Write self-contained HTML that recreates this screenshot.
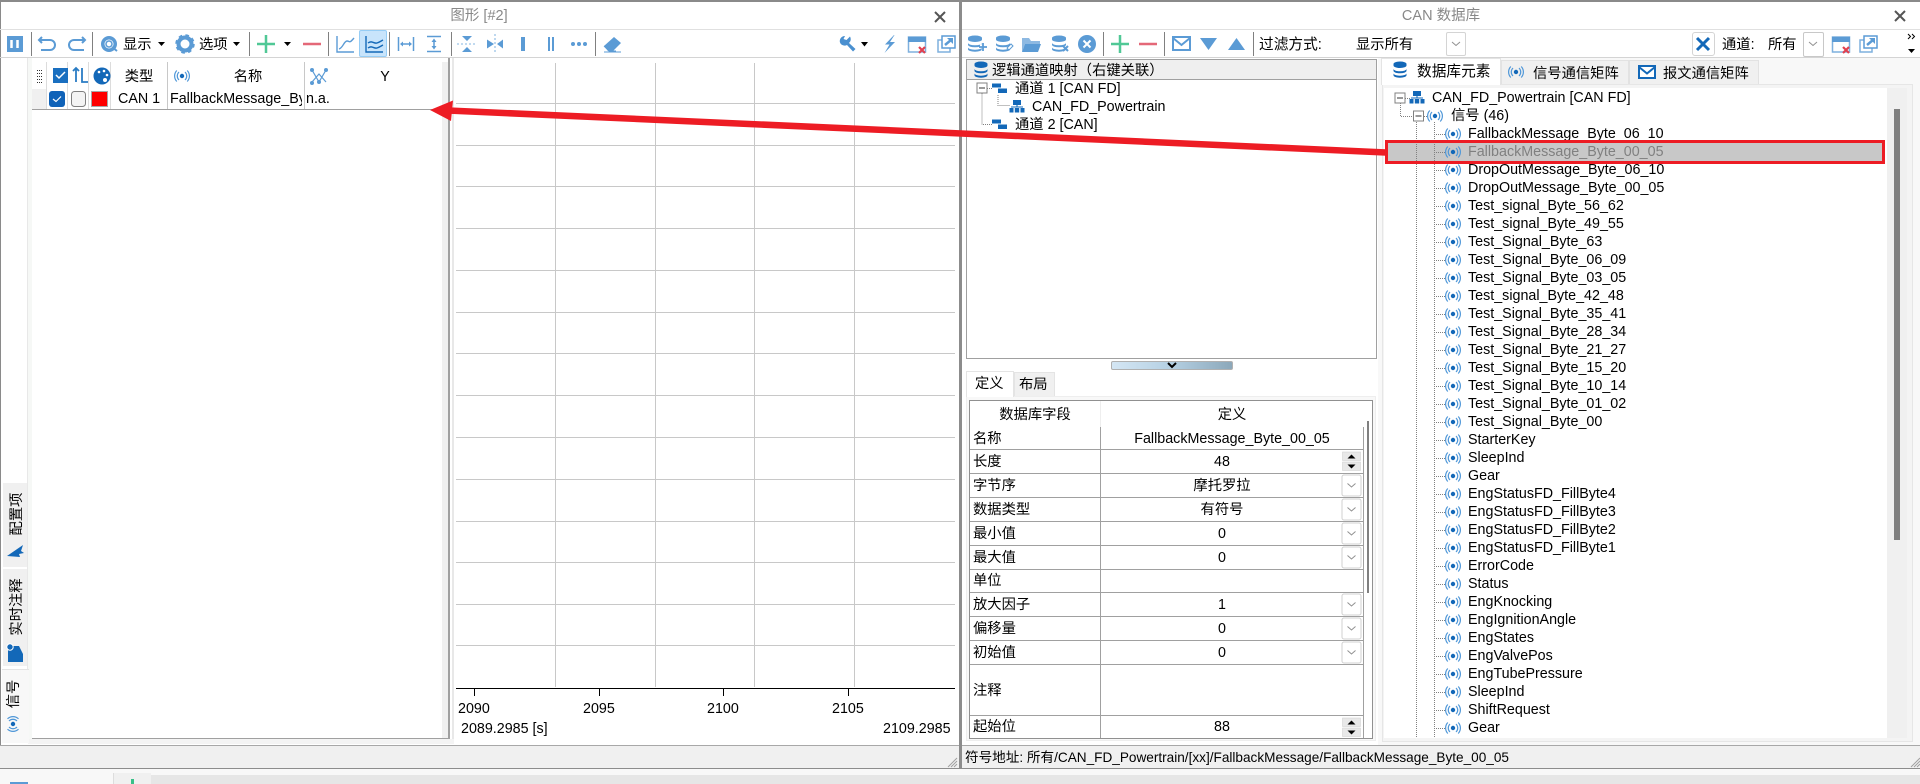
<!DOCTYPE html>
<html><head><meta charset="utf-8"><style>
html,body{margin:0;padding:0;background:#fff}
#p{position:relative;width:1920px;height:784px;overflow:hidden;background:#fff;font-family:"Liberation Sans","Noto Sans CJK SC",sans-serif;font-size:14.3px;color:#000}
.b{position:absolute}
.t{position:absolute;white-space:nowrap;line-height:18px;height:18px}
.c{transform:translateX(-50%)}
.r{transform:rotate(-90deg);transform-origin:center}
svg{position:absolute;left:0;top:0}
</style></head><body><div id="p">
<!-- frames -->
<div class="b" style="left:0;top:0;width:1920px;height:2px;background:#8a8a8a"></div>
<div class="b" style="left:0;top:0;width:1px;height:770px;background:#8a8a8a"></div>
<div class="b" style="left:0;top:29px;width:959px;height:1px;background:#e0e0e0"></div>
<div class="b" style="left:961px;top:29px;width:959px;height:1px;background:#e0e0e0"></div>
<div class="b" style="left:0;top:57px;width:959px;height:1px;background:#d4d4d4"></div>
<div class="b" style="left:961px;top:57px;width:959px;height:1px;background:#d4d4d4"></div>
<div class="b" style="left:959px;top:0;width:3px;height:770px;background:#8c8c8c"></div>

<!-- left panel -->
<div class="b" style="left:27px;top:58px;width:1px;height:681px;background:#e8e8e8"></div>
<div class="b" style="left:28px;top:58px;width:4px;height:685px;background:#f6f8f6"></div>
<div class="b" style="left:442px;top:62px;width:6px;height:676px;background:#f0f0f0"></div>
<div class="b" style="left:448px;top:58px;width:2px;height:681px;background:#a0a0a0"></div>
<div class="b" style="left:452px;top:58px;width:2px;height:686px;background:#e8e8e8"></div>
<div class="b" style="left:32px;top:738px;width:418px;height:1px;background:#a0a0a0"></div>
<div class="b" style="left:28px;top:739px;width:426px;height:5px;background:#f4f4f4"></div>
<div class="b" style="left:32px;top:89px;width:14px;height:20px;background:#f0f0f0"></div>
<div class="b" style="left:32px;top:109px;width:410px;height:1px;background:#a0a0a0"></div>
<div class="b" style="left:46px;top:62px;width:1px;height:47px;background:#dcdcdc"></div>
<div class="b" style="left:67px;top:62px;width:1px;height:47px;background:#dcdcdc"></div>
<div class="b" style="left:88px;top:62px;width:1px;height:47px;background:#dcdcdc"></div>
<div class="b" style="left:110px;top:62px;width:1px;height:47px;background:#dcdcdc"></div>
<div class="b" style="left:167px;top:62px;width:1px;height:47px;background:#c8c8c8"></div>
<div class="b" style="left:304px;top:62px;width:1px;height:47px;background:#c8c8c8"></div>

<!-- left tabs -->
<div class="b" style="left:3px;top:483px;width:24px;height:84px;background:#f0f0f0"></div>
<div class="b" style="left:3px;top:569px;width:24px;height:97px;background:#f0f0f0"></div>
<div class="b" style="left:2px;top:669px;width:27px;height:73px;background:#f8f8f8;border-top:1px solid #e4e4e4"></div>

<!-- bottom bars -->
<div class="b" style="left:0;top:745px;width:959px;height:1px;background:#a8a8a8"></div>
<div class="b" style="left:0;top:746px;width:959px;height:22px;background:#f0f0f0"></div>
<div class="b" style="left:962px;top:745px;width:958px;height:1px;background:#a8a8a8"></div>
<div class="b" style="left:962px;top:746px;width:958px;height:22px;background:#f0f0f0"></div>
<div class="b" style="left:0;top:768px;width:1920px;height:1px;background:#8c8c8c"></div>
<div class="b" style="left:0;top:769px;width:1920px;height:6px;background:#f8f8f8"></div>
<div class="b" style="left:0;top:775px;width:1920px;height:9px;background:#e6e6e6"></div>
<div class="b" style="left:0;top:769px;width:113px;height:15px;background:#f8f8f8"></div>
<div class="b" style="left:113px;top:773px;width:37px;height:11px;background:#f0f0f0;border-left:1px solid #ddd"></div>
<div class="b" style="left:10px;top:782px;width:18px;height:2px;background:#5b9bd5"></div>
<div class="b" style="left:131px;top:779px;width:3px;height:5px;background:#38c088"></div>

<!-- right panels -->
<div class="b" style="left:1378px;top:58px;width:542px;height:687px;background:#f8f8f8"></div>
<div class="b" style="left:1382px;top:84px;width:531px;height:658px;background:#f4f4f4;border:1px solid #e6e6e6;box-sizing:border-box"></div>
<div class="b" style="left:1384px;top:88px;width:503px;height:650px;background:#fff"></div>
<div class="b" style="left:1887px;top:88px;width:20px;height:650px;background:#f0f0f0"></div>
<div class="b" style="left:1894px;top:109px;width:6px;height:431px;background:#808080"></div>
<div class="b" style="left:1381px;top:58px;width:120px;height:27px;background:#fff;border:1px solid #e4e4e4;border-bottom:0;box-sizing:border-box"></div>
<div class="b" style="left:1501px;top:60px;width:128px;height:24px;background:#f0f0f0;border:1px solid #e2e2e2;border-bottom:0;box-sizing:border-box"></div>
<div class="b" style="left:1629px;top:60px;width:130px;height:24px;background:#f0f0f0;border:1px solid #e2e2e2;border-bottom:0;box-sizing:border-box"></div>
<div class="b" style="left:1388px;top:143px;width:494px;height:18px;background:#c8c8c8"></div>

<!-- tree box -->
<div class="b" style="left:966px;top:59px;width:411px;height:300px;box-sizing:border-box;border:1px solid #a0a0a0;background:#fff"></div>
<div class="b" style="left:967px;top:60px;width:409px;height:19px;background:#efefef;border-bottom:1px solid #a0a0a0"></div>
<div class="b" style="left:1111px;top:361px;width:122px;height:9px;box-sizing:border-box;border:1px solid #b0b0b0;border-radius:2px;background:linear-gradient(90deg,#d4e6f4,#b4cfe2 50%,#8ca8ba)"></div>

<!-- def tabs/table -->
<div class="b" style="left:966px;top:396px;width:410px;height:345px;background:#f8f8f8;border:1px solid #eee;box-sizing:border-box"></div>
<div class="b" style="left:966px;top:371px;width:48px;height:26px;background:#fff;border:1px solid #e4e4e4;border-bottom:0;box-sizing:border-box"></div>
<div class="b" style="left:1014px;top:372px;width:41px;height:24px;background:#f0f0f0;border:1px solid #e4e4e4;border-bottom:0;box-sizing:border-box"></div>
<div class="b" style="left:969px;top:400px;width:404px;height:339px;box-sizing:border-box;border:1px solid #909090;background:#fff"></div>
<div class="b" style="left:1100px;top:427px;width:1px;height:311px;background:#a0a0a0"></div>
<div class="b" style="left:1100px;top:401px;width:1px;height:26px;background:#eee"></div>
<div class="b" style="left:1363px;top:427px;width:1px;height:311px;background:#a0a0a0"></div>
<div class="b" style="left:1367px;top:421px;width:2px;height:172px;background:#808080"></div>
<div class="b" style="left:970px;top:449px;width:393px;height:1px;background:#a0a0a0"></div>
<div class="b" style="left:970px;top:473px;width:393px;height:1px;background:#a0a0a0"></div>
<div class="b" style="left:970px;top:497px;width:393px;height:1px;background:#a0a0a0"></div>
<div class="b" style="left:970px;top:521px;width:393px;height:1px;background:#a0a0a0"></div>
<div class="b" style="left:970px;top:545px;width:393px;height:1px;background:#a0a0a0"></div>
<div class="b" style="left:970px;top:569px;width:393px;height:1px;background:#a0a0a0"></div>
<div class="b" style="left:970px;top:592px;width:393px;height:1px;background:#a0a0a0"></div>
<div class="b" style="left:970px;top:616px;width:393px;height:1px;background:#a0a0a0"></div>
<div class="b" style="left:970px;top:640px;width:393px;height:1px;background:#a0a0a0"></div>
<div class="b" style="left:970px;top:664px;width:393px;height:1px;background:#a0a0a0"></div>
<div class="b" style="left:970px;top:715px;width:393px;height:1px;background:#a0a0a0"></div>

<!-- active toolbar btn -->
<div class="b" style="left:359px;top:30px;width:28px;height:27px;box-sizing:border-box;background:#c8e4fb;border:1px solid #96cdf5;border-radius:2px"></div>
<div class="b" style="left:1446px;top:32px;width:20px;height:24px;box-sizing:border-box;background:#fff;border:1px solid #d4d4d4;border-radius:2px"></div>
<div class="b" style="left:1692px;top:32px;width:23px;height:24px;box-sizing:border-box;background:#fff;border:1px solid #d4d4d4;border-radius:3px"></div>
<div class="b" style="left:1803px;top:32px;width:21px;height:25px;box-sizing:border-box;background:#fff;border:1px solid #c8c8c8;border-radius:2px"></div>

<svg width="1920" height="784" viewBox="0 0 1920 784">
<defs>
<g id="sig"><circle r="2.2" fill="#1368b8"/><path d="M-3-4a5.5 5.5 0 0 0 0 8M3-4a5.5 5.5 0 0 1 0 8M-5.2-5.5a8 8 0 0 0 0 11M5.2-5.5a8 8 0 0 1 0 11" stroke="#4f97d8" fill="none" stroke-width="1.2"/></g>
<g id="db" fill="#1368b8"><path d="M-6.5-6a6.5 2.5 0 0 1 13 0v1.5a6.5 2.5 0 0 1-13 0z"/><path d="M-6.5-1.2a6.5 2.5 0 0 0 13 0v2a6.5 2.5 0 0 1-13 0z"/><path d="M-6.5 3.2a6.5 2.5 0 0 0 13 0v2a6.5 2.5 0 0 1-13 0z"/></g>
<g id="dbl" fill="#5b9bd5"><path d="M-7-6a7 2.5 0 0 1 14 0v1.5a7 2.5 0 0 1-14 0z"/><path d="M-7-1.2a7 2.5 0 0 0 14 0v2a7 2.5 0 0 1-14 0z"/><path d="M-7 3.2a7 2.5 0 0 0 14 0v2a7 2.5 0 0 1-14 0z"/></g>
<path id="hier" fill="#1368b8" d="M-4-7h8v5h-8zM-7.5 1h4v4.5h-4zM-2.2 1h4.4v4.5h-4.4zM3.5 1h4v4.5h-4zM-.5-2h1v2h-1zM-6-.5h12v1h-12z"/>
<path id="chan" fill="#1368b8" d="M-7-4.5h9v4h-9zM-1 .5h9v4.5h-9z"/>
<g id="exp"><rect x="-5" y="-5" width="10" height="10" fill="#fff" stroke="#808080"/><path d="M-3 0h6" stroke="#333"/></g>
<g id="dd"><rect x=".5" y=".5" width="19" height="21" rx="2" fill="#fff" stroke="#d0d0d0"/><path d="M6 9l4 3.5 4-3.5" stroke="#909090" fill="none"/></g>
<g id="spin"><rect width="18" height="8.5" fill="#e8e8e8" stroke="#ccc" stroke-width=".5"/><rect y="10" width="18" height="8.5" fill="#e8e8e8" stroke="#ccc" stroke-width=".5"/><path d="M5 6.5l4-4 4 4zM5 12.5h8l-4 4z"/></g>
<path id="vs" d="M0 0v24" stroke="#808080"/>
<g id="wx"><path d="M.5 1h17v15h-17z" fill="#fff" stroke="#7fb0de" stroke-width="1.5"/><path d="M0 1h18v5h-18z" fill="#5b9bd5"/><path d="M11 11l6 6M17 11l-6 6" stroke="#e0404f" stroke-width="2.2"/></g>
<g id="pop"><path d="M1 5h12v12h-12z" fill="#fff" stroke="#7fb0de" stroke-width="1.5"/><path d="M5 1h13v12h-13z" fill="#fff" stroke="#5b9bd5" stroke-width="1.5"/><path d="M8 10l6-5" stroke="#5b9bd5" stroke-width="2.500" fill="none"/><path d="M10 3h6v6z" fill="#5b9bd5"/></g>
</defs>

<!-- grid -->
<g stroke="#c8c8c8" fill="none">
<path d="M555.5 63V687M655.5 63V687M754.5 63V687M854.5 63V687"/>
<path d="M456 103.5H955M456 145.5H955M456 186.5H955M456 228.5H955M456 270.5H955M456 312.5H955M456 353.5H955M456 395.5H955M456 437.5H955M456 479.5H955M456 521.5H955M456 562.5H955M456 604.5H955M456 645.5H955"/>
</g>
<path d="M456 688.5H955M474.5 688V696M599.5 688V696M723.5 688V696M848.5 688V696" stroke="#000" fill="none"/>

<!-- toolbar seps -->
<g>
<use href="#vs" x="31.5" y="32"/><use href="#vs" x="92.5" y="32"/><use href="#vs" x="249.5" y="32"/><use href="#vs" x="328.5" y="32"/><use href="#vs" x="389.5" y="32"/><use href="#vs" x="451.5" y="32"/><use href="#vs" x="595.5" y="32"/>
<use href="#vs" x="1103.5" y="32"/><use href="#vs" x="1164.5" y="32"/><use href="#vs" x="1253.5" y="32"/>
</g>

<!-- left toolbar icons -->
<rect x="7" y="36" width="16" height="16" fill="#5b9bd5"/><path d="M11.5 40v8M17.5 40v8" stroke="#fff" stroke-width="2.5"/>
<path d="M42 37l-3 3 3 3M40 40h10a5 5 0 0 1 0 10H41" fill="none" stroke="#5b9bd5" stroke-width="2"/>
<path d="M82 37l3 3-3 3M84 40H74a5 5 0 0 0 0 10h10" fill="none" stroke="#5b9bd5" stroke-width="2"/>
<circle cx="109" cy="44" r="8" fill="#5b9bd5"/><circle cx="109" cy="44" r="4.5" fill="#fff"/><circle cx="109" cy="44" r="3" fill="none" stroke="#5b9bd5" stroke-width="1.5"/><path d="M112 47l5 4" stroke="#5b9bd5" stroke-width="2"/>
<path d="M158 42h7l-3.5 4zM233 42h7l-3.5 4zM284 42h7l-3.5 4z" fill="#000"/>
<circle cx="185" cy="44" r="6.5" fill="none" stroke="#5b9bd5" stroke-width="4"/><circle cx="185" cy="44" r="8.5" fill="none" stroke="#5b9bd5" stroke-width="2.5" stroke-dasharray="3.5 3.2"/>
<path d="M257 44h18M266 35v18" stroke="#50c896" stroke-width="2.5"/>
<path d="M303 44h18" stroke="#e46878" stroke-width="2.5"/>
<path d="M337 36v16h17M339 49c4-1 5-8 8-8s2 3 7-3" fill="none" stroke="#5b9bd5" stroke-width="1.4"/>
<path d="M366 36v16h17M368 43c4-3 6 1 9 0s4-2 6-3M368 48c4-3 6 1 9 0s4-2 6-3" fill="none" stroke="#1368b8" stroke-width="1.4"/>
<path d="M398.500 37v14M413.500 37v14M402 44h8" stroke="#5b9bd5" stroke-width="1.500" fill="none"/><path d="M403 41.500l-3 2.500 3 2.500zM409 41.500l3 2.500-3 2.500z" fill="#5b9bd5"/>
<path d="M427 36.500h14M427 51.500h14M434 41v6" stroke="#5b9bd5" stroke-width="1.500" fill="none"/><path d="M431.500 42l2.500-3.500 2.500 3.500zM431.500 46l2.500 3.500 2.500-3.500z" fill="#5b9bd5"/>
<path d="M457 44h18" stroke="#9cc3e6" stroke-width="1.300" stroke-dasharray="2 2"/>
<path d="M462 36h10l-5 5zM462 52h10l-5-5z" fill="#5b9bd5"/>
<path d="M495 34v19" stroke="#9cc3e6" stroke-width="1.300" stroke-dasharray="2 2"/><path d="M487 39.500l7 4.500-7 4.500zM503 39.500l-6 4.500 6 4.500z" fill="#5b9bd5"/>
<rect x="521" y="37" width="4" height="14" fill="#5b9bd5"/>
<path d="M549 37v14M553 37v14" stroke="#5b9bd5" stroke-width="2"/>
<circle cx="573" cy="44" r="2" fill="#5b9bd5"/><circle cx="579" cy="44" r="2" fill="#5b9bd5"/><circle cx="585" cy="44" r="2" fill="#5b9bd5"/>
<path d="M604 46l10-9 7 6-8 8h-5z" fill="#5b9bd5"/><path d="M604 46l5 5h7M604 52h17" stroke="#5b9bd5" fill="none"/>
<!-- wrench -->
<path d="M849 37.500a5.500 5.500 0 1 0 0 7.500" fill="none" stroke="#5b9bd5" stroke-width="0"/>
<path d="M845 36a5 5 0 0 0-5 6.500 5 5 0 0 0 7 2.500l6 6.500 2.500-2.500-6.500-6a5 5 0 0 0 1-6.500l-3.500 3.500-3-1z" fill="#4a90d0"/>
<path d="M861 42h7l-3.500 4.500z" fill="#000"/>
<path d="M894 35l-9 9.500h4.500l-5 8.500 10.500-11h-5l4.500-7z" fill="#5b9bd5"/>
<use href="#wx" x="908" y="36"/><use href="#pop" x="937" y="35"/>
<path d="M935 12l10 10M945 12l-10 10" stroke="#555" stroke-width="2"/>
<path d="M1895 11l10 10M1905 11l-10 10" stroke="#555" stroke-width="2"/>

<!-- list header icons -->
<path d="M37 70.500h6M37 73.500h6M37 76.500h6M37 79.500h6M37 82.500h6" stroke="#333" stroke-dasharray="1 1"/>
<rect x="53" y="68" width="15" height="15" fill="#1a6fc0"/><path d="M56 75l3 3 6-6" stroke="#fff" stroke-width="1.500" fill="none"/>
<path d="M76 82V69M73 71l3-3 3 3M82 68v14h6" fill="none" stroke="#2a7cc4" stroke-width="1.800"/>
<circle cx="102" cy="76" r="8.500" fill="#1368b8"/><circle cx="99" cy="72" r="1.300" fill="#fff"/><circle cx="104" cy="71" r="1.300" fill="#fff"/><circle cx="107" cy="75" r="1.300" fill="#fff"/><circle cx="105" cy="80" r="2" fill="#fff"/>
<use href="#sig" x="182" y="76"/>
<g fill="none" stroke="#5b9bd5" stroke-width="1.200"><path d="M312 70l7 12 7-12M312 82l7-8 7 8"/></g>
<g fill="#5b9bd5"><circle cx="312" cy="70" r="2"/><circle cx="326" cy="70" r="2"/><circle cx="312" cy="83" r="2"/><circle cx="319" cy="82" r="2"/></g>

<!-- list row -->
<rect x="49" y="91" width="16" height="16" rx="3" fill="#0f62b8"/><path d="M53 99l3 2.500 5-5" stroke="#fff" fill="none" stroke-width="1.200"/>
<rect x="71.500" y="91.500" width="14" height="15" rx="3" fill="#f4f4f4" stroke="#808080"/>
<rect x="91.500" y="91.500" width="16" height="15" fill="#fe0000" stroke="#a8a8a8"/>

<!-- left tab icons -->
<path d="M7 556l16-11-2 6 3 2-5 1 1 3z" fill="#1368b8"/>
<path d="M8 646h11l4 8v8H8z" fill="#1368b8"/><circle cx="10" cy="647" r="3.200" fill="#1368b8" stroke="#fff"/>
<g transform="translate(13 724) rotate(-90)"><use href="#sig"/></g>

<!-- right toolbar -->
<use href="#dbl" x="975" y="44"/><path d="M980 46h7M983.500 42v8" stroke="#fff" stroke-width="3.500"/><path d="M979 47h8M983 43v8" stroke="#5b9bd5" stroke-width="1.800"/>
<use href="#dbl" x="1003" y="44"/><path d="M1007 48l4-4 2 2-4 4z" fill="#fff" stroke="#5b9bd5"/>
<path d="M1022 38h7l2 3h9v3h-15l-3 8z" fill="#8db9e2"/><path d="M1025 44h16l-3 8h-16z" fill="#5b9bd5"/>
<use href="#dbl" x="1059" y="44"/><path d="M1063 46l5 5M1068 46l-5 5" stroke="#5b9bd5" stroke-width="2"/>
<circle cx="1087" cy="44" r="9" fill="#5b9bd5"/><path d="M1083.500 40.500l7 7M1090.500 40.500l-7 7" stroke="#fff" stroke-width="2"/>
<path d="M1111 44h18M1120 35v18" stroke="#50c896" stroke-width="2.500"/>
<path d="M1139 44h18" stroke="#e46878" stroke-width="2.500"/>
<rect x="1173" y="37" width="17" height="13" fill="#fff" stroke="#5b9bd5" stroke-width="2"/><path d="M1173 38l8.500 7 8.500-7" fill="none" stroke="#5b9bd5" stroke-width="2"/>
<path d="M1200 38h17l-8.500 12z" fill="#5b9bd5"/>
<path d="M1228 50h17l-8.500-12z" fill="#5b9bd5"/>
<path d="M1452 42l4 3.500 4-3.500M1809 42l4 3.500 4-3.500" fill="none" stroke="#909090"/>
<path d="M1697 38l12 12M1709 38l-12 12" stroke="#1368b8" stroke-width="3"/>
<use href="#wx" x="1832" y="36"/><use href="#pop" x="1859" y="35"/>
<path d="M1908 34l2.500 2.500-2.500 2.500M1912 34l2.500 2.500-2.500 2.500" fill="none" stroke="#000"/><path d="M1908 49h7l-3.500 4z"/>

<!-- right tabs icons -->
<use href="#db" x="1400" y="70"/>
<use href="#sig" x="1516" y="72"/>
<rect x="1639" y="66" width="16" height="12" fill="#fff" stroke="#1368b8" stroke-width="2"/><path d="M1639 67l8 6.500 8-6.500" fill="none" stroke="#1368b8" stroke-width="2"/>

<!-- left tree -->
<use href="#db" x="981" y="70"/>
<path d="M982 93.500V124.500H992M987 88.500H992M998 95V105.500H1010" stroke="#808080" stroke-dasharray="1 1" fill="none"/>
<use href="#exp" x="982" y="88"/>
<use href="#chan" x="999" y="88"/><use href="#hier" x="1017" y="107"/><use href="#chan" x="999" y="124"/>

<!-- splitter chevron -->
<path d="M1168 363l4 4 4-4" fill="none" stroke="#000" stroke-width="2"/>

<!-- table controls -->
<use href="#spin" x="1342.500" y="452"/>
<use href="#dd" x="1341.500" y="474.500"/><use href="#dd" x="1341.500" y="498.500"/><use href="#dd" x="1341.500" y="522.500"/><use href="#dd" x="1341.500" y="546.500"/>
<use href="#dd" x="1341.500" y="593.500"/><use href="#dd" x="1341.500" y="617.500"/><use href="#dd" x="1341.500" y="641.500"/>
<use href="#spin" x="1342.500" y="718"/>

<!-- right tree lines -->
<path d="M1400.500 103V116.500H1413M1405 98.500H1410M1416.500 122V738M1434.500 122V738M1424 116.500H1428" stroke="#808080" stroke-dasharray="1 1" fill="none"/>
<path d="M1434 134.500h11M1434 152.500h11M1434 170.500h11M1434 188.500h11M1434 206.500h11M1434 224.500h11M1434 242.500h11M1434 260.500h11M1434 278.500h11M1434 296.500h11M1434 314.500h11M1434 332.500h11M1434 350.500h11M1434 368.500h11M1434 386.500h11M1434 404.500h11M1434 422.500h11M1434 440.500h11M1434 458.500h11M1434 476.500h11M1434 494.500h11M1434 512.500h11M1434 530.500h11M1434 548.500h11M1434 566.500h11M1434 584.500h11M1434 602.500h11M1434 620.500h11M1434 638.500h11M1434 656.500h11M1434 674.500h11M1434 692.500h11M1434 710.500h11M1434 728.500h11" stroke="#808080" stroke-dasharray="1 1" fill="none"/>
<use href="#exp" x="1400" y="98"/><use href="#exp" x="1418.500" y="116"/>
<use href="#hier" x="1417" y="98"/><use href="#sig" x="1435" y="116"/>
<use href="#sig" x="1453" y="134"/><use href="#sig" x="1453" y="152"/><use href="#sig" x="1453" y="170"/><use href="#sig" x="1453" y="188"/><use href="#sig" x="1453" y="206"/><use href="#sig" x="1453" y="224"/><use href="#sig" x="1453" y="242"/><use href="#sig" x="1453" y="260"/><use href="#sig" x="1453" y="278"/><use href="#sig" x="1453" y="296"/><use href="#sig" x="1453" y="314"/><use href="#sig" x="1453" y="332"/><use href="#sig" x="1453" y="350"/><use href="#sig" x="1453" y="368"/><use href="#sig" x="1453" y="386"/><use href="#sig" x="1453" y="404"/><use href="#sig" x="1453" y="422"/><use href="#sig" x="1453" y="440"/><use href="#sig" x="1453" y="458"/><use href="#sig" x="1453" y="476"/><use href="#sig" x="1453" y="494"/><use href="#sig" x="1453" y="512"/><use href="#sig" x="1453" y="530"/><use href="#sig" x="1453" y="548"/><use href="#sig" x="1453" y="566"/><use href="#sig" x="1453" y="584"/><use href="#sig" x="1453" y="602"/><use href="#sig" x="1453" y="620"/><use href="#sig" x="1453" y="638"/><use href="#sig" x="1453" y="656"/><use href="#sig" x="1453" y="674"/><use href="#sig" x="1453" y="692"/><use href="#sig" x="1453" y="710"/><use href="#sig" x="1453" y="728"/>

<!-- grips -->
<path d="M948 767l9-9M951 767l6-6M954 767l3-3M1911 767l9-9M1914 767l6-6M1917 767l3-3" stroke="#a0a0a0"/>
</svg>

<!-- text -->
<div class="t c" style="left:479px;top:7px;color:#888;font-size:14.5px">图形 [#2]</div>
<div class="t c" style="left:1441px;top:7px;color:#888;font-size:14.5px">CAN 数据库</div>
<div class="t" style="left:123px;top:36px">显示</div>
<div class="t" style="left:199px;top:36px">选项</div>
<div class="t" style="left:1259px;top:36px;font-size:14.7px">过滤方式:</div>
<div class="t" style="left:1356px;top:36px">显示所有</div>
<div class="t" style="left:1722px;top:36px">通道:</div>
<div class="t" style="left:1768px;top:36px">所有</div>
<div class="t c" style="left:139px;top:68px">类型</div>
<div class="t c" style="left:248px;top:68px">名称</div>
<div class="t c" style="left:385px;top:68px">Y</div>
<div class="t" style="left:118px;top:90px">CAN 1</div>
<div class="t" style="left:170px;top:90px;width:132px;overflow:hidden">FallbackMessage_Byte_00_05</div>
<div class="t" style="left:306px;top:90px">n.a.</div>
<div class="t" style="left:458px;top:700px">2090</div>
<div class="t" style="left:583px;top:700px">2095</div>
<div class="t" style="left:707px;top:700px">2100</div>
<div class="t" style="left:832px;top:700px">2105</div>
<div class="t" style="left:461px;top:720px">2089.2985 [s]</div>
<div class="t" style="left:883px;top:720px">2109.2985</div>
<div class="t r" style="left:-5px;top:505px;width:44px;text-align:center">配置项</div>
<div class="t r" style="left:-13px;top:598px;width:60px;text-align:center">实时注释</div>
<div class="t r" style="left:-2px;top:685px;width:32px;text-align:center">信号</div>

<div class="t" style="left:992px;top:62px">逻辑通道映射（右键关联）</div>
<div class="t" style="left:1015px;top:80px">通道 1 [CAN FD]</div>
<div class="t" style="left:1032px;top:98px">CAN_FD_Powertrain</div>
<div class="t" style="left:1015px;top:116px">通道 2 [CAN]</div>

<div class="t" style="left:1417px;top:63px;font-size:14.7px">数据库元素</div>
<div class="t" style="left:1533px;top:65px">信号通信矩阵</div>
<div class="t" style="left:1663px;top:65px">报文通信矩阵</div>
<div class="t" style="left:1432px;top:89px">CAN_FD_Powertrain [CAN FD]</div>
<div class="t" style="left:1451px;top:107px">信号 (46)</div>
<div class="t" style="left:1468px;top:125px">FallbackMessage_Byte_06_10</div>
<div class="t" style="left:1468px;top:143px;color:#808080">FallbackMessage_Byte_00_05</div>
<div class="t" style="left:1468px;top:161px">DropOutMessage_Byte_06_10</div>
<div class="t" style="left:1468px;top:179px">DropOutMessage_Byte_00_05</div>
<div class="t" style="left:1468px;top:197px">Test_signal_Byte_56_62</div>
<div class="t" style="left:1468px;top:215px">Test_signal_Byte_49_55</div>
<div class="t" style="left:1468px;top:233px">Test_Signal_Byte_63</div>
<div class="t" style="left:1468px;top:251px">Test_Signal_Byte_06_09</div>
<div class="t" style="left:1468px;top:269px">Test_Signal_Byte_03_05</div>
<div class="t" style="left:1468px;top:287px">Test_signal_Byte_42_48</div>
<div class="t" style="left:1468px;top:305px">Test_Signal_Byte_35_41</div>
<div class="t" style="left:1468px;top:323px">Test_Signal_Byte_28_34</div>
<div class="t" style="left:1468px;top:341px">Test_Signal_Byte_21_27</div>
<div class="t" style="left:1468px;top:359px">Test_Signal_Byte_15_20</div>
<div class="t" style="left:1468px;top:377px">Test_Signal_Byte_10_14</div>
<div class="t" style="left:1468px;top:395px">Test_Signal_Byte_01_02</div>
<div class="t" style="left:1468px;top:413px">Test_Signal_Byte_00</div>
<div class="t" style="left:1468px;top:431px">StarterKey</div>
<div class="t" style="left:1468px;top:449px">SleepInd</div>
<div class="t" style="left:1468px;top:467px">Gear</div>
<div class="t" style="left:1468px;top:485px">EngStatusFD_FillByte4</div>
<div class="t" style="left:1468px;top:503px">EngStatusFD_FillByte3</div>
<div class="t" style="left:1468px;top:521px">EngStatusFD_FillByte2</div>
<div class="t" style="left:1468px;top:539px">EngStatusFD_FillByte1</div>
<div class="t" style="left:1468px;top:557px">ErrorCode</div>
<div class="t" style="left:1468px;top:575px">Status</div>
<div class="t" style="left:1468px;top:593px">EngKnocking</div>
<div class="t" style="left:1468px;top:611px">EngIgnitionAngle</div>
<div class="t" style="left:1468px;top:629px">EngStates</div>
<div class="t" style="left:1468px;top:647px">EngValvePos</div>
<div class="t" style="left:1468px;top:665px">EngTubePressure</div>
<div class="t" style="left:1468px;top:683px">SleepInd</div>
<div class="t" style="left:1468px;top:701px">ShiftRequest</div>
<div class="t" style="left:1468px;top:719px">Gear</div>

<div class="t" style="left:975px;top:375px">定义</div>
<div class="t" style="left:1019px;top:376px">布局</div>
<div class="t c" style="left:1035px;top:406px">数据库字段</div>
<div class="t c" style="left:1232px;top:406px">定义</div>
<div class="t" style="left:973px;top:430px">名称</div>
<div class="t c" style="left:1232px;top:430px">FallbackMessage_Byte_00_05</div>
<div class="t" style="left:973px;top:453px">长度</div><div class="t c" style="left:1222px;top:453px">48</div>
<div class="t" style="left:973px;top:477px">字节序</div><div class="t c" style="left:1222px;top:477px">摩托罗拉</div>
<div class="t" style="left:973px;top:501px">数据类型</div><div class="t c" style="left:1222px;top:501px">有符号</div>
<div class="t" style="left:973px;top:525px">最小值</div><div class="t c" style="left:1222px;top:525px">0</div>
<div class="t" style="left:973px;top:549px">最大值</div><div class="t c" style="left:1222px;top:549px">0</div>
<div class="t" style="left:973px;top:572px">单位</div>
<div class="t" style="left:973px;top:596px">放大因子</div><div class="t c" style="left:1222px;top:596px">1</div>
<div class="t" style="left:973px;top:620px">偏移量</div><div class="t c" style="left:1222px;top:620px">0</div>
<div class="t" style="left:973px;top:644px">初始值</div><div class="t c" style="left:1222px;top:644px">0</div>
<div class="t" style="left:973px;top:682px">注释</div>
<div class="t" style="left:973px;top:718px">起始位</div><div class="t c" style="left:1222px;top:718px">88</div>
<div class="t" style="left:965px;top:749px;font-size:13.6px">符号地址: 所有/CAN_FD_Powertrain/[xx]/FallbackMessage/FallbackMessage_Byte_00_05</div>

<!-- red annotation -->
<svg width="1920" height="784" viewBox="0 0 1920 784" style="z-index:5">
<rect x="1386.500" y="141.500" width="497" height="21" fill="none" stroke="#ed1c24" stroke-width="3"/>
<path d="M1386 152.500L448 110.500" stroke="#ed1c24" stroke-width="6.500"/>
<path d="M430 110L453 100.500L451 121z" fill="#ed1c24"/>
</svg>
</div></body></html>
